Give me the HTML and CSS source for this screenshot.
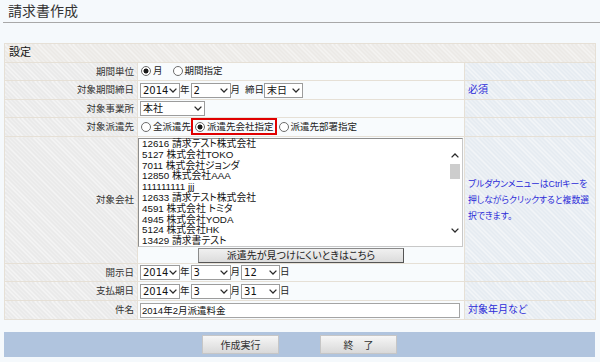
FILE: index.html
```html
<!DOCTYPE html>
<html lang="ja">
<head>
    <meta charset="UTF-8">
    <title>請求書作成</title>
    <link rel="stylesheet" href="styles.css">
</head>
<body>
    <h1 class="page-title">請求書作成</h1>

    <table class="form-table">
        <colgroup>
            <col class="col-label">
            <col class="col-field">
            <col class="col-note">
        </colgroup>
        <tr>
            <th colspan="3" class="section-head">設定</th>
        </tr>
        <tr>
            <td class="label">期間単位</td>
            <td class="field">
                <label class="radio"><input type="radio" name="unit" checked>月</label>
                <label class="radio"><input type="radio" name="unit">期間指定</label>
            </td>
            <td class="note"></td>
        </tr>
        <tr class="tall">
            <td class="label">対象期間締日</td>
            <td class="field"><span class="sel w-year"><select><option>2014</option></select><svg class="chev" width="8" height="5" viewBox="0 0 8 5"><path d="M0.6 0.6 L4 4 L7.4 0.6"/></svg></span>年<span class="sel w-num"><select><option>2</option></select><svg class="chev" width="8" height="5" viewBox="0 0 8 5"><path d="M0.6 0.6 L4 4 L7.4 0.6"/></svg></span>月<span class="gap">締日</span><span class="sel w-day"><select><option>末日</option></select><svg class="chev" width="8" height="5" viewBox="0 0 8 5"><path d="M0.6 0.6 L4 4 L7.4 0.6"/></svg></span></td>
            <td class="note">必須</td>
        </tr>
        <tr>
            <td class="label">対象事業所</td>
            <td class="field"><span class="sel w-office"><select><option>本社</option></select><svg class="chev" width="8" height="5" viewBox="0 0 8 5"><path d="M0.6 0.6 L4 4 L7.4 0.6"/></svg></span></td>
            <td class="note"></td>
        </tr>
        <tr class="tall">
            <td class="label">対象派遣先</td>
            <td class="field"><label class="radio first"><input type="radio" name="target">全派遣先</label><label class="radio marked"><input type="radio" name="target" checked>派遣先会社指定</label><label class="radio"><input type="radio" name="target">派遣先部署指定</label></td>
            <td class="note"></td>
        </tr>
        <tr>
            <td class="label">対象会社</td>
            <td class="field field-list">
                <div class="listbox">
                    <ul class="list-items">
                        <li>12616 請求テスト株式会社</li>
                        <li>5127 株式会社TOKO</li>
                        <li>7011 株式会社ジョンダ</li>
                        <li>12850 株式会社AAA</li>
                        <li>111111111 jjj</li>
                        <li>12633 請求テスト株式会社</li>
                        <li>4591 株式会社 トミタ</li>
                        <li>4945 株式会社YODA</li>
                        <li>5124 株式会社HK</li>
                        <li>13429 請求書テスト</li>
                    </ul>
                    <div class="scrollbar">
                        <svg class="arrow-up" width="8" height="5" viewBox="0 0 8 5"><path d="M0.6 4.4 L4 1 L7.4 4.4"/></svg>
                        <div class="thumb"></div>
                        <svg class="arrow-down" width="8" height="5" viewBox="0 0 8 5"><path d="M0.6 0.6 L4 4 L7.4 0.6"/></svg>
                    </div>
                </div>
                <button class="find-button">派遣先が見つけにくいときはこちら</button>
            </td>
            <td class="note note-multi">プルダウンメニューはCtrlキーを<br>押しながらクリックすると複数選<br>択できます。</td>
        </tr>
        <tr>
            <td class="label">開示日</td>
            <td class="field"><span class="sel w-year"><select><option>2014</option></select><svg class="chev" width="8" height="5" viewBox="0 0 8 5"><path d="M0.6 0.6 L4 4 L7.4 0.6"/></svg></span>年<span class="sel w-num"><select><option>3</option></select><svg class="chev" width="8" height="5" viewBox="0 0 8 5"><path d="M0.6 0.6 L4 4 L7.4 0.6"/></svg></span>月<span class="sel w-date"><select><option>12</option></select><svg class="chev" width="8" height="5" viewBox="0 0 8 5"><path d="M0.6 0.6 L4 4 L7.4 0.6"/></svg></span>日</td>
            <td class="note"></td>
        </tr>
        <tr class="tall">
            <td class="label">支払期日</td>
            <td class="field"><span class="sel w-year"><select><option>2014</option></select><svg class="chev" width="8" height="5" viewBox="0 0 8 5"><path d="M0.6 0.6 L4 4 L7.4 0.6"/></svg></span>年<span class="sel w-num"><select><option>3</option></select><svg class="chev" width="8" height="5" viewBox="0 0 8 5"><path d="M0.6 0.6 L4 4 L7.4 0.6"/></svg></span>月<span class="sel w-date"><select><option>31</option></select><svg class="chev" width="8" height="5" viewBox="0 0 8 5"><path d="M0.6 0.6 L4 4 L7.4 0.6"/></svg></span>日</td>
            <td class="note"></td>
        </tr>
        <tr class="tall">
            <td class="label">件名</td>
            <td class="field">
                <input type="text" class="text-input" value="2014年2月派遣料金">
            </td>
            <td class="note">対象年月など</td>
        </tr>
    </table>

    <div class="actions">
        <button class="action-button">作成実行</button>
        <button class="action-button">終　了</button>
    </div>
</body>
</html>
```

FILE: styles.css
```css
/* 基本 */
* {
    box-sizing: border-box;
}

body {
    margin: 0;
    background: #f5f9fc;
    font-family: "DejaVu Sans", "Noto Sans CJK JP", sans-serif;
    font-feature-settings: "palt";
    font-size: 9.5px;
    color: #222;
}

/* タイトル */
.page-title {
    margin: 0 0 0 3px;
    padding-left: 5px;
    height: 23px;
    font-size: 14px;
    font-weight: normal;
    line-height: 22px;
    color: #333;
    border-bottom: 1px solid #a8a8a8;
}

/* 入力テーブル */
.form-table {
    margin: 20px 0 0 4px;
    width: 591px;
    border-collapse: collapse;
    table-layout: fixed;
}

.col-label { width: 133px; }
.col-field { width: 327px; }
.col-note { width: 131px; }

.form-table th,
.form-table td {
    height: 18px;
    padding: 0 2px;
    border: 1px solid #e6e0d6;
    line-height: 14px;
    vertical-align: middle;
}

.form-table .tall td {
    height: 19px;
}

.section-head {
    text-align: left;
    padding-left: 4px !important;
    height: 19px !important;
    font-size: 11px;
    font-weight: normal;
    color: #111;
    background: #ebe9e6 repeating-linear-gradient(45deg, rgba(255, 255, 255, 0.55) 0 1px, transparent 1px 3px);
}

.label {
    text-align: right;
    color: #333;
    padding-right: 3px !important;
    background: #e9e9e9 repeating-linear-gradient(45deg, rgba(255, 255, 255, 0.6) 0 1px, transparent 1px 3px);
}

.field {
    background: #f8fbfd;
    white-space: nowrap;
}

.note {
    padding-left: 3px !important;
    font-family: "Liberation Sans", "Noto Sans CJK JP", sans-serif;
    font-size: 10px;
    color: #2b2bd8;
    line-height: 16px !important;
    border-left-color: #d5dde8 !important;
    background: #e5ebf1 repeating-linear-gradient(45deg, rgba(255, 255, 255, 0.6) 0 1px, transparent 1px 3px);
}

.note-multi {
    white-space: nowrap;
    font-size: 8.8px;
}

/* ラジオボタン */
.radio {
    display: inline-flex;
    align-items: center;
    margin-right: 6px;
}

.radio input {
    -webkit-appearance: none;
    appearance: none;
    width: 10px;
    height: 10px;
    margin: 0 2px 0 1px;
    border: 1px solid #6c6c6c;
    border-radius: 50%;
    background: #fff;
}

.radio input:checked {
    background: radial-gradient(circle, #1a1a1a 0 2.2px, #fff 2.8px);
}

.radio.first {
    margin-right: 0;
}

.radio.marked {
    margin-right: 1px;
    padding: 0 1px 0 1px;
    height: 17px;
    border: 2px solid #e00000;
}

/* セレクト */
.sel {
    position: relative;
    display: inline-block;
    vertical-align: middle;
}

.sel select {
    -webkit-appearance: none;
    appearance: none;
    display: block;
    height: 15px;
    padding: 0 0 0 2px;
    border: 1px solid #9c9c9c;
    border-radius: 0;
    background: #fff;
    font: inherit;
    font-size: 10px;
    line-height: 13px;
    color: #111;
}

.sel .chev {
    position: absolute;
    right: 3px;
    top: 5px;
    pointer-events: none;
}

.sel .chev path,
.scrollbar path {
    fill: none;
    stroke: #2a2a2a;
    stroke-width: 1.3;
}

.w-num,
.w-date {
    margin-left: 1px;
}

.w-year select { width: 40px; }
.w-num select { width: 40px; }
.w-date select { width: 39px; }
.w-day select { width: 39px; }
.w-office select { width: 65px; }

.gap {
    margin-left: 5px;
}

/* 会社リスト */
.field-list {
    padding: 1px 0 0 0 !important;
    vertical-align: top !important;
}

.listbox {
    display: flex;
    width: 325px;
    height: 109px;
    border: 1px solid #8e8e8e;
    border-right-color: #c8c8c8;
    border-bottom-color: #c8c8c8;
    background: #fff;
}

.list-items {
    flex: 1;
    margin: 0;
    padding: 0 0 0 3px;
    list-style: none;
    font-family: "Liberation Sans", "Noto Sans CJK JP", sans-serif;
    font-size: 9.8px;
    line-height: 10.8px;
    color: #111;
}

.scrollbar {
    width: 12px;
    margin-right: 1px;
    display: flex;
    flex-direction: column;
    align-items: center;
}

.arrow-up {
    margin-top: 14px;
}

.thumb {
    width: 10px;
    height: 15px;
    margin-top: 6px;
    background: #cdcdcd;
}

.arrow-down {
    margin-top: auto;
    margin-bottom: 13px;
}

.find-button {
    display: block;
    width: 206px;
    height: 15px;
    margin: 1px auto 0;
    padding: 0;
    border: 1px solid #8a8a8a;
    border-right-color: #555;
    border-bottom-color: #555;
    background: linear-gradient(#f0f0f0, #dcdcdc);
    font: inherit;
    font-size: 10px;
    line-height: 12px;
    color: #222;
}

/* 件名 */
.text-input {
    display: block;
    width: 320px;
    height: 15px;
    margin-left: 0;
    padding: 0 1px;
    border: 1px solid #a4a4a4;
    background: #fff;
    font-family: "Liberation Sans", "Noto Sans CJK JP", sans-serif;
    font-size: 9.5px;
    color: #111;
}

/* ボタンバー */
.actions {
    margin: 12px 0 0 4px;
    width: 591px;
    height: 25px;
    display: flex;
    justify-content: center;
    align-items: center;
    gap: 41px;
    background: #b0c4de;
}

.action-button {
    width: 77px;
    height: 19px;
    padding: 0;
    border: 1px solid #c6c6c6;
    background: linear-gradient(#f6f6f6, #d9d9d9);
    font: inherit;
    font-size: 10px;
    color: #333;
}
```
